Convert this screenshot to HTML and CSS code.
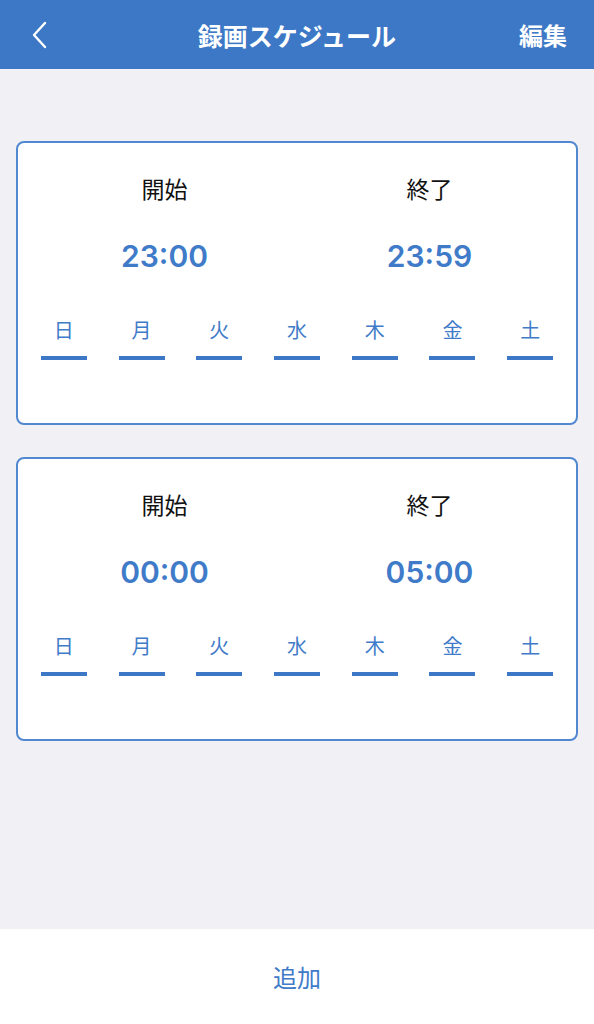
FILE: index.html
```html
<!DOCTYPE html>
<html>
<head>
  <title>録画スケジュール</title>
<meta name="viewport" content="width=device-width, initial-scale=1">
<link rel="stylesheet" href="styles.css">
</head>
<body>
  <header class="topbar">
    <svg class="back" width="20" height="30" viewBox="0 0 20 30"><path d="M16 3 L5 15 L16 27" fill="none" stroke="white" stroke-width="2.4" stroke-linecap="round" stroke-linejoin="round"/></svg>
    <h1 class="title">録画スケジュール</h1>
    <span class="edit">編集</span>
  </header>

  <main class="list">
    <div class="card">
      <div class="times">
        <div class="col"><div class="label">開始</div><div class="time">23:00</div></div>
        <div class="col"><div class="label">終了</div><div class="time">23:59</div></div>
      </div>
      <div class="days">
        <div class="day"><span>日</span><i></i></div>
        <div class="day"><span>月</span><i></i></div>
        <div class="day"><span>火</span><i></i></div>
        <div class="day"><span>水</span><i></i></div>
        <div class="day"><span>木</span><i></i></div>
        <div class="day"><span>金</span><i></i></div>
        <div class="day"><span>土</span><i></i></div>
      </div>
    </div>

    <div class="card">
      <div class="times">
        <div class="col"><div class="label">開始</div><div class="time">00:00</div></div>
        <div class="col"><div class="label">終了</div><div class="time">05:00</div></div>
      </div>
      <div class="days">
        <div class="day"><span>日</span><i></i></div>
        <div class="day"><span>月</span><i></i></div>
        <div class="day"><span>火</span><i></i></div>
        <div class="day"><span>水</span><i></i></div>
        <div class="day"><span>木</span><i></i></div>
        <div class="day"><span>金</span><i></i></div>
        <div class="day"><span>土</span><i></i></div>
      </div>
    </div>
  </main>

  <footer class="bottombar">追加</footer>
</body>
</html>
```

FILE: styles.css
```css
body {
  margin: 0;
  height: 1024px;
  display: flex;
  flex-direction: column;
  background-color: #f0f0f5;
  font-family: "Noto Sans CJK JP", "Liberation Sans", sans-serif;
}

.topbar {
  height: 69px;
  flex-shrink: 0;
  background-color: #3d78c6;
  color: white;
  display: flex;
  align-items: center;
  justify-content: space-between;
  padding: 0 27px 0 29px;
  position: relative;
}

.back {
  display: block;
}

.title {
  position: absolute;
  left: 0;
  right: 0;
  margin: 0;
  text-align: center;
  font-size: 25px;
  font-weight: bold;
  pointer-events: none;
}

.edit {
  font-size: 24px;
  font-weight: bold;
}

.list {
  flex: 1;
  padding: 72px 16px 0;
  display: flex;
  flex-direction: column;
  gap: 32px;
}

.card {
  height: 284px;
  box-sizing: border-box;
  background-color: white;
  border: 2px solid #5288d0;
  border-radius: 8px;
  padding: 30px 7px 0;
}

.times {
  display: grid;
  grid-template-columns: 1fr 1fr;
  padding: 0 7px;
}

.col {
  text-align: center;
}

.label {
  font-size: 23px;
  line-height: 30px;
  color: #111;
}

.time {
  margin-top: 33px;
  font-family: Inter, "Liberation Sans", sans-serif;
  font-size: 30px;
  line-height: 40px;
  font-weight: 600;
  color: #3f7bc8;
}

.days {
  margin-top: 40px;
  display: grid;
  grid-template-columns: repeat(7, 1fr);
}

.day {
  display: flex;
  flex-direction: column;
  align-items: center;
}

.day span {
  font-size: 20px;
  line-height: 28px;
  color: #3f7bc8;
}

.day i {
  display: block;
  width: 46px;
  height: 4px;
  margin-top: 12px;
  background-color: #3d78c6;
}

.bottombar {
  height: 95px;
  flex-shrink: 0;
  background-color: white;
  display: flex;
  align-items: center;
  justify-content: center;
  font-size: 24px;
  color: #3f7bc8;
}
```
